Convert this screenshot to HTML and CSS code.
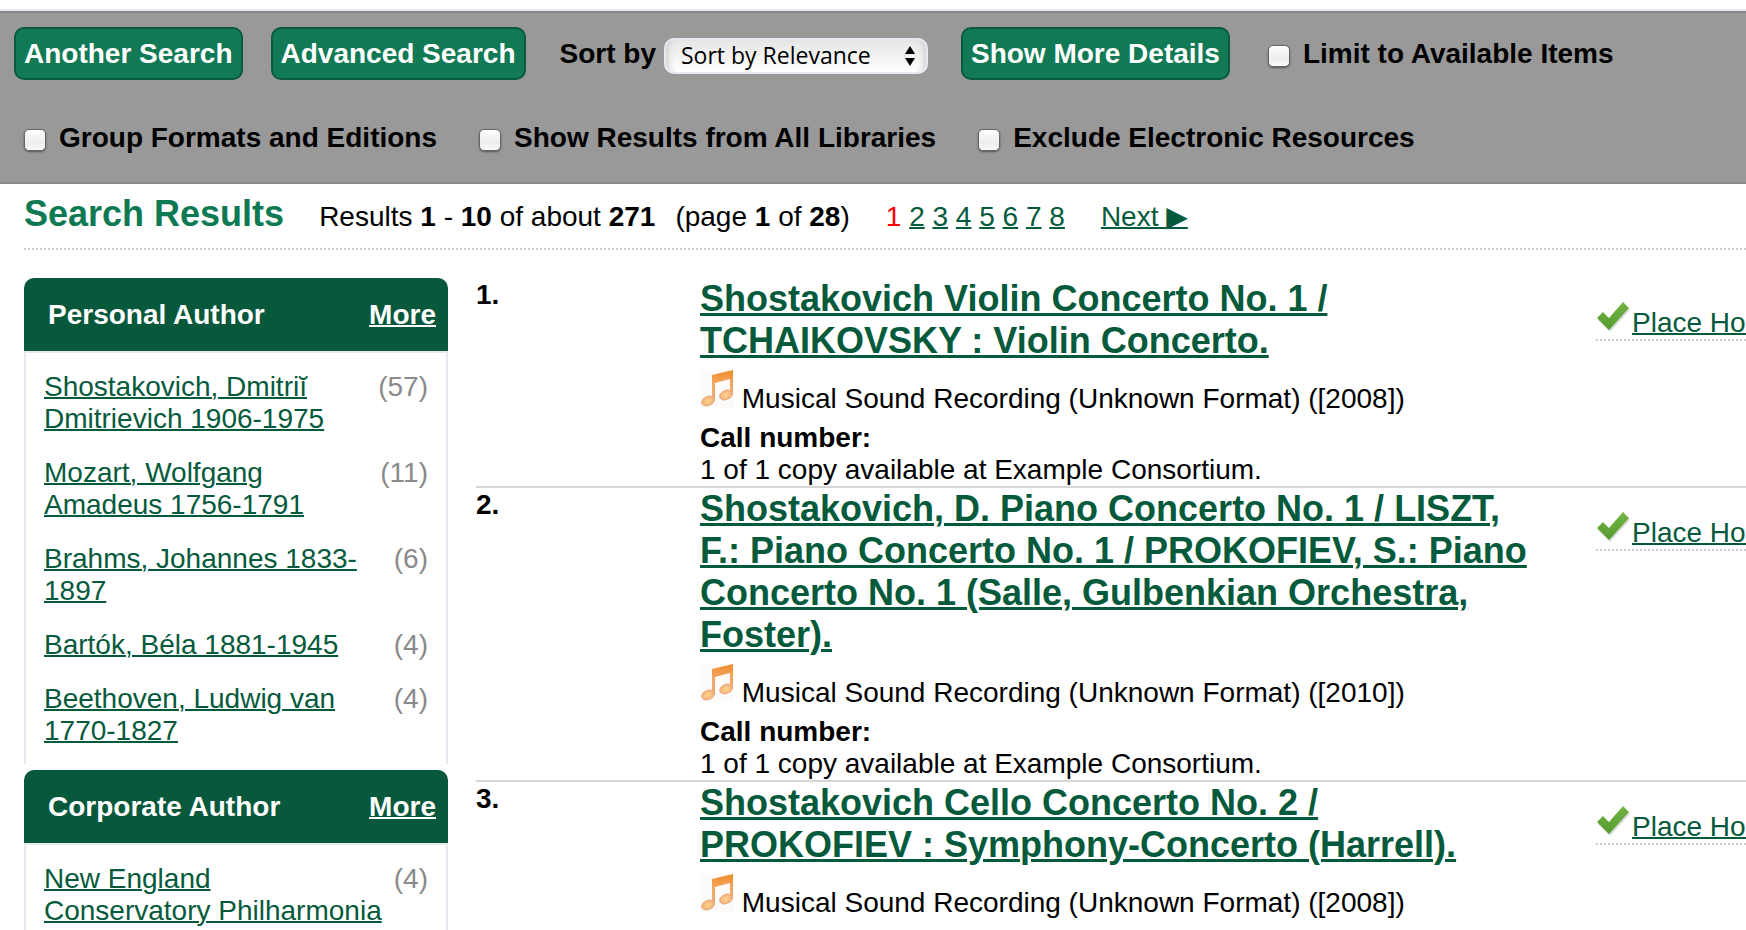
FILE: index.html
```
<!DOCTYPE html>
<html lang="en">
<head>
<meta charset="utf-8">
<meta name="viewport" content="width=device-width, initial-scale=1">
<title>Search Results</title>
<link rel="stylesheet" href="styles.css">
</head>
<body>
<svg class="defs" aria-hidden="true">
  <defs>
    <linearGradient id="beam" x1="0" y1="0" x2="0" y2="1">
      <stop offset="0" stop-color="#ee8a2a"/>
      <stop offset="0.4" stop-color="#f3a55c"/>
      <stop offset="1" stop-color="#eba97c"/>
    </linearGradient>
    <radialGradient id="head">
      <stop offset="0" stop-color="#fbd38f"/>
      <stop offset="0.6" stop-color="#f6c080"/>
      <stop offset="1" stop-color="#e9a27c"/>
    </radialGradient>
    <linearGradient id="leaf" x1="0" y1="0" x2="0" y2="1">
      <stop offset="0" stop-color="#72b545"/>
      <stop offset="1" stop-color="#569a30"/>
    </linearGradient>
    <symbol id="notes" viewBox="0 0 34 38">
      <rect width="34" height="38" fill="#fdfafa"/>
      <path d="M12 5 L33 0 V25 H30 V9 L15 13 V31 H12 Z" fill="url(#beam)"/>
      <ellipse cx="8" cy="31" rx="7" ry="5" transform="rotate(-24 8 31)" fill="url(#head)"/>
      <ellipse cx="26" cy="25" rx="7" ry="5" transform="rotate(-24 26 25)" fill="url(#head)"/>
    </symbol>
    <symbol id="check" viewBox="0 0 34 30">
      <path d="M2 18 L8 12 L14 18 L28 3 L34 8 L14 30 Z" fill="#999" opacity="0.35"/>
      <path d="M1 16 L7 10 L13 16 L27 0 L33 6 L13 28 Z" fill="url(#leaf)"/>
    </symbol>
  </defs>
</svg>

<form class="toolbar">
  <div class="toolbar-row toolbar-main">
    <button class="btn" type="button">Another Search</button>
    <button class="btn" type="button">Advanced Search</button>
    <div class="sort">
      <label for="sort">Sort by</label>
      <span class="select-wrap">
        <select id="sort" class="select"><option>Sort by Relevance</option></select>
        <svg class="select-arrows" viewBox="0 0 10 20" aria-hidden="true"><path d="M5 0 L10 8 H0 Z M0 12 H10 L5 20 Z"/></svg>
      </span>
    </div>
    <button class="btn" type="button">Show More Details</button>
    <label class="check"><input type="checkbox">Limit to Available Items</label>
  </div>
  <div class="toolbar-row toolbar-filters">
    <label class="check"><input type="checkbox">Group Formats and Editions</label>
    <label class="check"><input type="checkbox">Show Results from All Libraries</label>
    <label class="check"><input type="checkbox">Exclude Electronic Resources</label>
  </div>
</form>

<div class="page">
  <header class="summary">
    <h1>Search Results</h1>
    <span>Results <b>1</b> - <b>10</b> of about <b>271</b></span>
    <span class="page-of">(page <b>1</b> of <b>28</b>)</span>
    <nav class="pager">
      <span class="current">1</span> <a href="#">2</a> <a href="#">3</a> <a href="#">4</a> <a href="#">5</a> <a href="#">6</a> <a href="#">7</a> <a href="#">8</a>
    </nav>
    <a class="next" href="#">Next <span class="arrow">▶</span></a>
  </header>

  <div class="columns">
    <aside class="facets">
      <section class="facet">
        <div class="facet-head"><h2>Personal Author</h2><a href="#">More</a></div>
        <ul class="facet-list">
          <li><a href="#">Shostakovich, Dmitriĭ Dmitrievich 1906-1975</a><span>(57)</span></li>
          <li><a href="#">Mozart, Wolfgang Amadeus 1756-1791</a><span>(11)</span></li>
          <li><a href="#">Brahms, Johannes 1833-1897</a><span>(6)</span></li>
          <li><a href="#">Bartók, Béla 1881-1945</a><span>(4)</span></li>
          <li><a href="#">Beethoven, Ludwig van 1770-1827</a><span>(4)</span></li>
        </ul>
      </section>
      <section class="facet">
        <div class="facet-head"><h2>Corporate Author</h2><a href="#">More</a></div>
        <ul class="facet-list">
          <li><a href="#">New England Conservatory Philharmonia</a><span>(4)</span></li>
        </ul>
      </section>
    </aside>

    <main class="results">
      <article class="result">
        <div class="number">1.</div>
        <div class="record">
          <h2><a href="#">Shostakovich Violin Concerto No. 1 / TCHAIKOVSKY : Violin Concerto.</a></h2>
          <div class="format"><svg class="notes" aria-hidden="true"><use href="#notes"/></svg> Musical Sound Recording (Unknown Format) ([2008])</div>
          <div><b>Call number:</b></div>
          <div>1 of 1 copy available at Example Consortium.</div>
        </div>
        <div class="action"><svg class="tick" aria-hidden="true"><use href="#check"/></svg><a href="#">Place Hold</a></div>
      </article>
      <article class="result">
        <div class="number">2.</div>
        <div class="record">
          <h2><a href="#">Shostakovich, D. Piano Concerto No. 1 / LISZT, F.: Piano Concerto No. 1 / PROKOFIEV, S.: Piano Concerto No. 1 (Salle, Gulbenkian Orchestra, Foster).</a></h2>
          <div class="format"><svg class="notes" aria-hidden="true"><use href="#notes"/></svg> Musical Sound Recording (Unknown Format) ([2010])</div>
          <div><b>Call number:</b></div>
          <div>1 of 1 copy available at Example Consortium.</div>
        </div>
        <div class="action"><svg class="tick" aria-hidden="true"><use href="#check"/></svg><a href="#">Place Hold</a></div>
      </article>
      <article class="result">
        <div class="number">3.</div>
        <div class="record">
          <h2><a href="#">Shostakovich Cello Concerto No. 2 / PROKOFIEV : Symphony-Concerto (Harrell).</a></h2>
          <div class="format"><svg class="notes" aria-hidden="true"><use href="#notes"/></svg> Musical Sound Recording (Unknown Format) ([2008])</div>
        </div>
        <div class="action"><svg class="tick" aria-hidden="true"><use href="#check"/></svg><a href="#">Place Hold</a></div>
      </article>
    </main>
  </div>
</div>
</body>
</html>
```

FILE: styles.css
```
* { box-sizing: border-box; }

html { overflow: hidden; }

body {
  margin: 0;
  padding-top: 9px;
  background: #fff;
  color: #000;
  font: 28px/32px "Liberation Sans", Arial, sans-serif;
}

h1, h2, ul { margin: 0; padding: 0; }

a {
  color: #055a3c;
  text-decoration-thickness: 2px;
}

.defs { position: absolute; width: 0; height: 0; }

/* Toolbar */
.toolbar {
  border-top: 2px solid #e4e8f0;
  background: #999;
  font-weight: bold;
}

.toolbar-row { display: flex; align-items: center; }

.toolbar-main {
  padding: 14px 14px 0;
  border-top: 2px solid #888;
}

.toolbar-filters {
  gap: 42px;
  padding: 42px 24px 28px;
  border-bottom: 2px solid #888;
}

.btn {
  margin-right: 28px;
  padding: 9px 8px 8px;
  border: 2px solid #0a5a3d;
  border-radius: 10px;
  background: #117a55;
  color: #fff;
  font: inherit;
  white-space: nowrap;
}

.sort {
  display: flex;
  align-items: center;
  gap: 8px;
  margin: 0 33px 0 6px;
}

.select-wrap { position: relative; display: flex; margin-top: 4px; }

.select {
  appearance: none;
  width: 264px;
  height: 36px;
  padding: 0 15px 2px;
  border: 2px solid #e6e9f0;
  border-radius: 10px;
  background: linear-gradient(#e6e6e6, #fff);
  box-shadow: inset 8px 0 6px -6px #ccc, inset -8px 0 6px -6px #ccc;
  color: #000;
  font: 23px/30px "Open Sans", "Noto Sans", sans-serif;
}

.select-arrows {
  position: absolute;
  top: 8px;
  right: 13px;
  width: 10px;
  height: 20px;
  pointer-events: none;
}

.check { display: flex; align-items: center; gap: 13px; white-space: nowrap; }

.toolbar-main .check { margin-left: 10px; }

.check input {
  appearance: none;
  width: 22px;
  height: 22px;
  margin: 4px 0 0;
  border: 1px solid #666;
  border-radius: 5px;
  background: linear-gradient(#fff, #ececec 60%, #fafafa);
  box-shadow: 0 1px 2px #555;
}

/* Summary line */
.page { padding-left: 24px; }

.summary {
  display: flex;
  align-items: baseline;
  height: 66px;
  padding-top: 9px;
  border-bottom: 2px dotted #ccc;
  white-space: nowrap;
}

.summary h1 {
  margin-right: 35px;
  color: #0d7a53;
  font-size: 36px;
  line-height: 42px;
}

.page-of { margin-left: 20px; }
.pager { margin-left: 36px; }
.current { color: #f00; }
.next { margin-left: 36px; }
.arrow { font-family: "DejaVu Sans", sans-serif; }

/* Facets */
.columns { display: flex; align-items: flex-start; gap: 28px; padding-top: 28px; }

.facets { flex: 0 0 424px; }
.facet { margin-bottom: 6px; }

.facet-head {
  display: flex;
  justify-content: space-between;
  padding: 21px 12px 20px 24px;
  border-radius: 10px 10px 0 0;
  background: #08583c;
  color: #fff;
  font-weight: bold;
}

.facet-head h2 { font-size: inherit; }
.facet-head a { color: inherit; }

.facet-list {
  display: grid;
  gap: 22px;
  padding: 18px 18px 17px;
  border: solid #e6e9f0;
  border-width: 2px 2px 0;
  list-style: none;
}

.facet-list li { display: flex; justify-content: space-between; }
.facet-list a { flex: 0 1 340px; }
.facet-list span { color: #8a8a8a; margin-left: -40px; }

/* Results */
.results { flex: 1; min-width: 0; }

.result {
  display: grid;
  grid-template-columns: 224px minmax(0, 1fr) 150px;
  align-items: start;
  border-bottom: 2px solid #d6d6d6;
}

.result:last-child { border-bottom: 0; }

.number { padding-top: 1px; font-weight: bold; }
.record { padding-right: 60px; }
.record h2 { font-size: 36px; line-height: 42px; }
.record h2 a { text-decoration-thickness: 3px; }
.format { padding: 8px 0 7px; }

.notes { width: 34px; height: 38px; vertical-align: baseline; }

.action {
  min-width: 0;
  margin-top: 24px;
  border-bottom: 2px dotted #ccc;
  white-space: nowrap;
}

.tick { width: 34px; height: 30px; margin-right: 2px; vertical-align: baseline; }
```
